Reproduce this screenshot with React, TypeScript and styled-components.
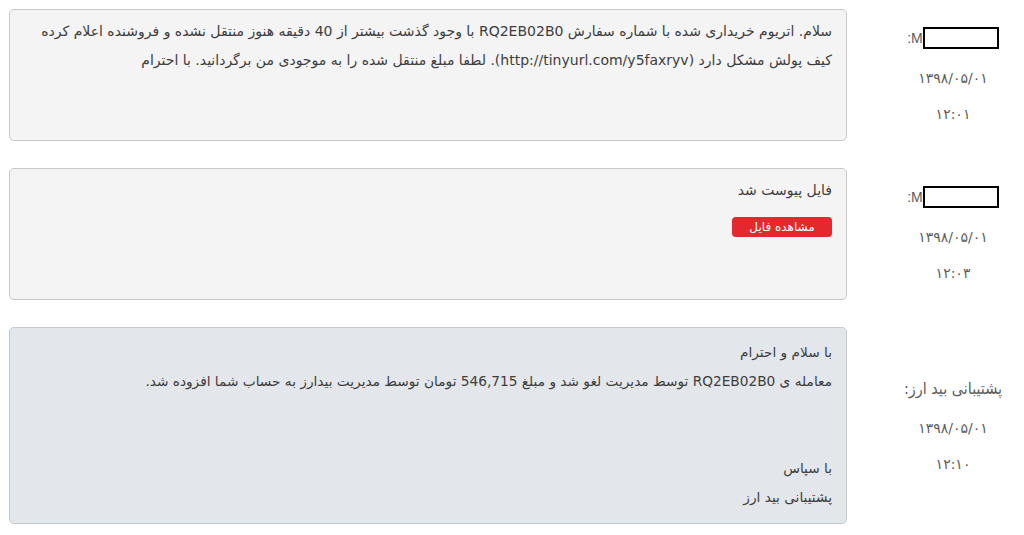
import React from 'react';
import styled, { createGlobalStyle } from 'styled-components';

const GlobalStyle = createGlobalStyle`
    body {
        margin: 0;
        background: #ffffff;
        font-family: 'DejaVu Sans', 'Noto Sans', sans-serif;
    }
`;

const Page = styled.div`
    direction: rtl;
    display: flex;
    flex-direction: column;
    gap: 27px;
    padding: 9px 0 0 9px;
    width: 1015px;
`;

const Row = styled.div`
    display: flex;
    align-items: center;
`;

const Meta = styled.div`
    width: 177px;
    flex-shrink: 0;
    display: flex;
    flex-direction: column;
    align-items: center;
    padding-left: 35px;
    box-sizing: border-box;
    color: #5c5c5c;
`;

const Author = styled.div<{ $big?: boolean }>`
    direction: ${p => (p.$big ? 'rtl' : 'ltr')};
    display: flex;
    align-items: center;
    font-family: ${p => (p.$big ? "'DejaVu Sans Condensed', 'DejaVu Sans', sans-serif" : "'Liberation Sans', 'DejaVu Sans', sans-serif")};
    font-size: ${p => (p.$big ? '16px' : '14px')};
    height: 22px;
    margin-bottom: 19px;
`;

const Redacted = styled.span`
    display: inline-block;
    width: 72px;
    height: 18px;
    border: 2px solid #000;
    background: #fff;
`;

const DateLine = styled.div`
    font-size: 14px;
    line-height: 20px;
    margin-bottom: 16px;

    &:last-child {
        margin-bottom: 0;
    }
`;

const Bubble = styled.div<{ $support?: boolean }>`
    flex: 1;
    box-sizing: border-box;
    min-height: 132px;
    padding: ${p => (p.$support ? '10px 14px 11px' : '7px 14px')};
    background: ${p => (p.$support ? '#e3e6eb' : '#f4f4f5')};
    border: 1px solid #c8c8c8;
    border-radius: 5px;
    color: #3d3d3d;
    font-family: 'DejaVu Sans', sans-serif;
    font-size: ${p => (p.$support ? '13.7px' : '14px')};
    line-height: 29px;
`;

const Line = styled.div`
    min-height: 29px;
    white-space: nowrap;
`;

const FileButton = styled.button`
    display: block;
    width: 100px;
    height: 20px;
    margin-top: 12px;
    padding: 0;
    border: none;
    border-radius: 4px;
    background: #e3282e;
    color: #ffffff;
    font-family: 'DejaVu Sans', sans-serif;
    font-size: 12px;
    line-height: 20px;
    cursor: pointer;
`;

const MessageMeta: React.FC<{ name?: string; date: string; time: string }> = ({ name, date, time }) => (
    <Meta>
        {name ? (
            <Author $big>{name}</Author>
        ) : (
            <Author>
                :M
                <Redacted />
            </Author>
        )}
        <DateLine>{date}</DateLine>
        <DateLine>{time}</DateLine>
    </Meta>
);

export default function App() {
    return (
        <>
            <GlobalStyle />
            <Page>
                <Row>
                    <MessageMeta date="۱۳۹۸/۰۵/۰۱" time="۱۲:۰۱" />
                    <Bubble>
                        <Line>
                            سلام. اتریوم خریداری شده با شماره سفارش RQ2EB02B0 با وجود گذشت بیشتر از 40 دقیقه هنوز منتقل
                            نشده و فروشنده اعلام کرده
                        </Line>
                        <Line>
                            کیف پولش مشکل دارد (http://tinyurl.com/y5faxryv). لطفا مبلغ منتقل شده را به موجودی من
                            برگردانید. با احترام
                        </Line>
                    </Bubble>
                </Row>

                <Row>
                    <MessageMeta date="۱۳۹۸/۰۵/۰۱" time="۱۲:۰۳" />
                    <Bubble>
                        <Line>فایل پیوست شد</Line>
                        <FileButton>مشاهده فایل</FileButton>
                    </Bubble>
                </Row>

                <Row>
                    <MessageMeta name="پشتیبانی بید ارز:" date="۱۳۹۸/۰۵/۰۱" time="۱۲:۱۰" />
                    <Bubble $support>
                        <Line>با سلام و احترام</Line>
                        <Line>
                            معامله ی RQ2EB02B0 توسط مدیریت لغو شد و مبلغ 546,715 تومان توسط مدیریت بیدارز به حساب شما
                            افزوده شد.
                        </Line>
                        <Line />
                        <Line />
                        <Line>با سپاس</Line>
                        <Line>پشتیبانی بید ارز</Line>
                    </Bubble>
                </Row>
            </Page>
        </>
    );
}
